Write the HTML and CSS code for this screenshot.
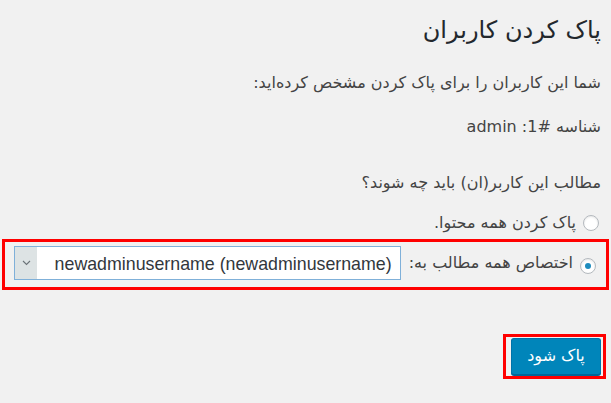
FILE: index.html
```html
<!DOCTYPE html>
<html lang="fa" dir="rtl">
<head>
<meta charset="utf-8">
<title>پاک کردن کاربران</title>
<link rel="stylesheet" href="styles.css">
</head>
<body>
<div class="wrap">
  <h1 class="title">پاک کردن کاربران</h1>
  <p class="line first">شما این کاربران را برای پاک کردن مشخص کرده‌اید:</p>
  <p class="line id">شناسه #&#x200F;1: admin</p>
  <p class="line question">مطالب این کاربر(ان) باید چه شوند؟</p>
  <div class="opt opt-delete">
    <span class="radio"></span>
    <span class="label">پاک کردن همه محتوا.</span>
  </div>
  <div class="opt opt-assign mark">
    <span class="radio checked"></span>
    <span class="label">اختصاص همه مطالب به:</span>
    <div class="select">
      <span class="select-value">newadminusername (newadminusername)</span>
      <span class="select-arrow">
        <svg width="9" height="6" viewBox="0 0 9 6"><path d="M1 1 L4.5 4.5 L8 1" fill="none" stroke="#6b7378" stroke-width="1.1"/></svg>
      </span>
    </div>
  </div>
  <div class="actions">
    <div class="mark btn-mark">
      <span class="button">پاک شود</span>
    </div>
  </div>
</div>
</body>
</html>
```
FILE: styles.css
```css
html, body {
  margin: 0;
  padding: 0;
  background: #f1f1f1;
}
body {
  font-family: "DejaVu Sans", "Liberation Sans", sans-serif;
  color: #444;
  direction: rtl;
}
.wrap {
  padding: 0 10px 0 2px;
}
.title {
  margin: 0;
  height: 60px;
  line-height: 60px;
  font-size: 24px;
  font-weight: 400;
  color: #23282d;
}
.line {
  margin: 0;
  line-height: 24px;
  font-size: 16px;
}
.first { margin-top: 11px; }
.id { margin-top: 20px; }
.question { margin-top: 32px; }
.opt {
  display: flex;
  align-items: center;
  font-size: 16px;
  line-height: 24px;
}
.opt-delete {
  margin-top: 16px;
  margin-right: 2px;
}
.radio {
  width: 16px;
  height: 16px;
  box-sizing: border-box;
  border: 1px solid #b4b9be;
  border-radius: 50%;
  background: #fff;
  box-shadow: inset 0 1px 2px rgba(0,0,0,0.1);
  display: flex;
  align-items: center;
  justify-content: center;
  flex: none;
}
.radio.checked::before {
  content: "";
  width: 6px;
  height: 6px;
  border-radius: 50%;
  background: #1e8cbe;
}
.label {
  margin-right: 7px;
}
.mark {
  border: 3px solid #ff0000;
}
.opt-assign {
  margin-top: 4px;
  margin-left: 0;
  margin-right: -8px;
  padding: 4px 10px 7px 9px;
}
.opt-assign .radio {
  margin-top: 6px;
}
.select {
  flex: 1;
  margin-right: 8px;
  height: 34px;
  box-sizing: border-box;
  border: 1px solid #7fb0d9;
  background: #fff;
  display: flex;
  align-items: center;
  font-family: "Liberation Sans", Arial, sans-serif;
  font-size: 17.8px;
  color: #32373c;
}
.select-value {
  padding-right: 8px;
  flex: 1;
  margin-top: 2px;
}
.select-arrow {
  width: 22px;
  align-self: stretch;
  background: #dde3e4;
  display: flex;
  align-items: center;
  justify-content: center;
}
.actions {
  display: flex;
  margin-top: 44px;
  margin-right: -5px;
}
.btn-mark {
  padding: 1px 2px 1px 5px;
}
.button {
  display: block;
  width: 90px;
  height: 37px;
  box-sizing: border-box;
  background: #0085ba;
  border: 1px solid #0073aa;
  border-bottom-color: #006799;
  border-radius: 3px;
  box-shadow: 0 1px 0 #006799;
  color: #fff;
  font-size: 16px;
  line-height: 34px;
  text-align: center;
}
```
